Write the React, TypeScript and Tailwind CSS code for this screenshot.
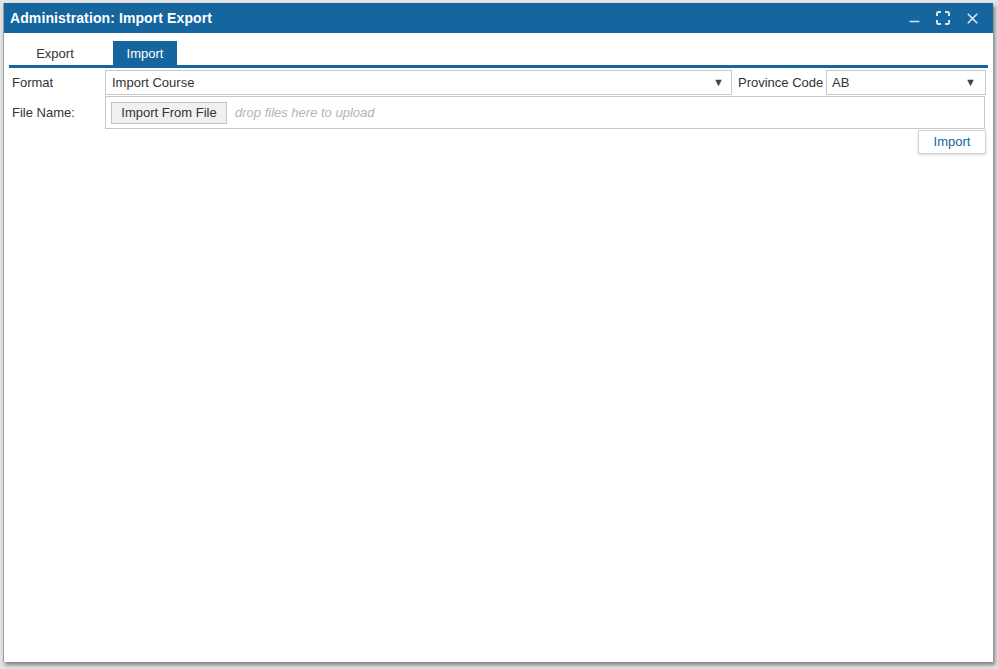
import { Minus, X } from "lucide-react"

function MaximizeIcon() {
  return (
    <svg width="14" height="14" viewBox="0 0 14 14" fill="none" stroke="currentColor" strokeWidth="2">
      <path d="M1 5V2.5Q1 1 2.5 1H5M9 1h2.5Q13 1 13 2.5V5M13 9v2.5Q13 13 11.5 13H9M5 13H2.5Q1 13 1 11.5V9" />
    </svg>
  )
}

function Caret() {
  return <span className="text-[11px] text-[#444]">▼</span>
}

export default function App() {
  return (
    <div className="h-[669px] w-[998px] overflow-hidden bg-[#e4e4e4] pl-[3px] pt-[3px] font-['Liberation_Sans',Arial,sans-serif] text-[13px] text-[#333]">
      <div className="flex h-[659px] w-[990px] flex-col border-l border-[#a0a0a0] bg-white shadow-[2px_3px_4px_rgba(0,0,0,0.45)]">
        {/* Title bar */}
        <div className="flex h-[30px] items-center justify-between bg-[#15659f] pl-[6px] pr-[12px] text-white">
          <span className="text-[14px] font-bold tracking-[0.1px]">Administration: Import Export</span>
          <div className="flex items-center gap-[14px] text-[#d6e4f0]">
            <Minus size={15} strokeWidth={2.2} className="mt-[6px]" />
            <MaximizeIcon />
            <X size={17} strokeWidth={2.4} />
          </div>
        </div>

        {/* Tabs */}
        <div className="mx-[5px] mt-[8px] flex h-[24px] items-end">
          <div className="mr-[12px] flex h-[24px] w-[92px] items-center justify-center pt-px">Export</div>
          <div className="flex h-[24px] w-[64px] items-center justify-center bg-[#15659f] pt-px text-white">Import</div>
        </div>
        <div className="mx-[5px] h-[3px] w-[979px] bg-[#15659f]" />

        {/* Form */}
        <div className="mt-[2px] flex h-[25px] items-center pl-[8px]">
          <span className="w-[93px]">Format</span>
          <div className="flex h-[25px] w-[627px] items-center justify-between border border-[#c8c8c8] pl-[6px] pr-[7px]">
            <span>Import Course</span>
            <Caret />
          </div>
          <span className="ml-[6px] w-[88px]">Province Code</span>
          <div className="flex h-[25px] w-[160px] items-center justify-between border border-[#c8c8c8] pl-[5px] pr-[9px]">
            <span>AB</span>
            <Caret />
          </div>
        </div>

        <div className="mt-px flex items-center pl-[8px]">
          <span className="w-[93px]">File Name:</span>
          <div className="flex h-[33px] w-[880px] items-center border border-[#c8c8c8] pl-[5px]">
            <button className="h-[22px] w-[116px] border border-[#c4c4c4] bg-[#f0f0f0] text-[13px] text-[#333]">
              Import From File
            </button>
            <span className="ml-[8px] italic text-[#b4b4b4]">drop files here to upload</span>
          </div>
        </div>

        <div className="mt-[1px] flex justify-end pr-[7px]">
          <button className="h-[24px] w-[68px] border border-[#d4d4d4] bg-white text-[13px] text-[#15659f] shadow-[0_1px_2px_rgba(0,0,0,0.15)]">
            Import
          </button>
        </div>
      </div>
    </div>
  )
}
